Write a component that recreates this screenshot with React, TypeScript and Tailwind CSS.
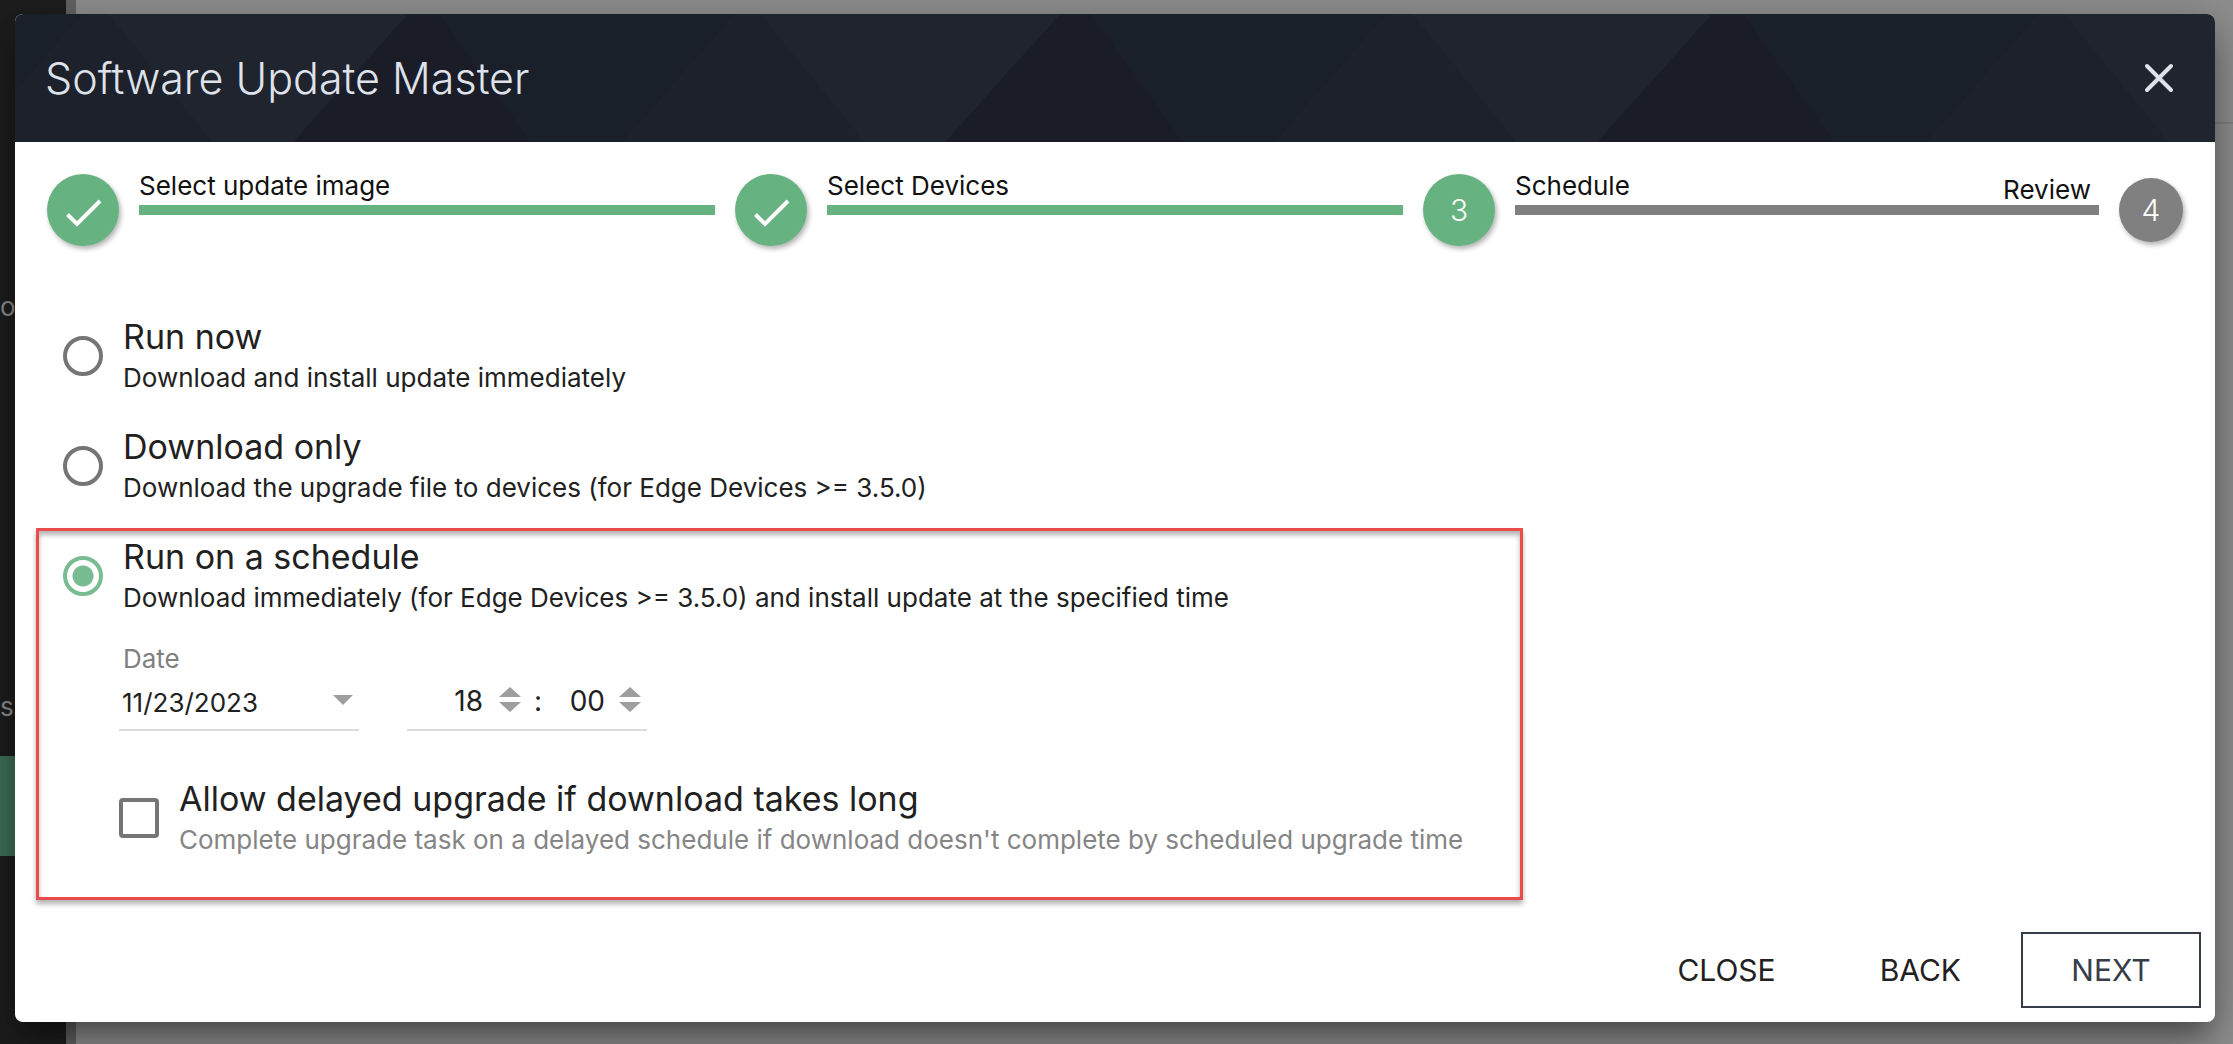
import { useState } from 'react';
import type { ReactNode } from 'react';

const STEPS = ['Select update image', 'Select Devices', 'Schedule'];

const MODES = [
  {
    id: 'now',
    title: 'Run now',
    hint: 'Download and install update immediately',
  },
  {
    id: 'download',
    title: 'Download only',
    hint: 'Download the upgrade file to devices (for Edge Devices >= 3.5.0)',
  },
];

function Backdrop() {
  return (
    <div className="absolute inset-0 flex overflow-hidden" aria-hidden="true">
      <div className="w-[66px] shrink-0 bg-[#1d1d1d] pt-[256px] text-[26px] text-[#8a8a8a]">
        <div className="flex h-[100px] items-center">o</div>
        <div className="h-[300px]" />
        <div className="flex h-[100px] items-center">s</div>
        <div className="h-[100px] bg-[#3d6f56]" />
      </div>
      <div className="w-[10px] shrink-0 bg-[#626262]" />
      <div className="flex-1 bg-[#8e8e8e]">
        <div className="h-[124px] border-b-2 border-[#7f7f7f]" />
      </div>
    </div>
  );
}

// repeating angular facets behind the dialog title
function HeaderPattern() {
  return (
    <svg className="absolute inset-0 h-full w-full" aria-hidden="true">
      <defs>
        <pattern id="facets" x="278" y="0" width="652" height="128" patternUnits="userSpaceOnUse">
          <rect width="652" height="128" fill="#1f242e" />
          <path d="M115 0H147L239 128H0Z" fill="#1a1c27" />
          <path d="M147 0H443L331 128H239Z" fill="#1a2029" />
          <path d="M443 0H468L572 128H331Z" fill="#1c212b" />
        </pattern>
      </defs>
      <rect width="100%" height="100%" fill="url(#facets)" />
    </svg>
  );
}

function Stepper() {
  return (
    <ol className="flex items-center pt-8 pr-8 pl-8 text-[26px] leading-6 text-[#111]">
      {STEPS.map((label, i) => {
        const done = i < 2;
        return (
          <li key={label} className={done ? 'flex flex-[1_1_100px] gap-5 pr-5' : 'flex flex-[1_1_108px] gap-5 pr-5'}>
            <span className="flex size-[72px] shrink-0 items-center justify-center rounded-full bg-[#67b281] text-[30px] font-light text-white shadow-[2px_3px_5px_rgba(0,0,0,0.3)]">
              {done ? (
                <svg viewBox="0 0 40 40" className="mt-1 size-10" fill="none" stroke="white" strokeWidth="4">
                  <path d="M4.5 22.5L14 32L37 9" />
                </svg>
              ) : (
                i + 1
              )}
            </span>
            <div className="flex-1">
              <div className="flex h-[31px] justify-between">
                <span>{label}</span>
                {!done && <span className="pt-1 pr-2">Review</span>}
              </div>
              <div className={done ? 'h-[10px] bg-[#67b281]' : 'h-[10px] bg-[#808080]'} />
            </div>
          </li>
        );
      })}
      <li className="flex size-16 shrink-0 items-center justify-center rounded-full bg-[#808080] text-[30px] font-light text-white shadow-[2px_3px_5px_rgba(0,0,0,0.3)]">
        4
      </li>
    </ol>
  );
}

type ModeOptionProps = {
  id: string;
  title: string;
  hint: string;
  checked: boolean;
  onSelect: (id: string) => void;
};

function ModeOption({ id, title, hint, checked, onSelect }: ModeOptionProps) {
  return (
    <label className="flex w-fit items-center gap-5">
      <input
        type="radio"
        name="mode"
        checked={checked}
        onChange={() => onSelect(id)}
        className="mt-[2px] size-10 shrink-0 appearance-none rounded-full border-4 border-[#757575] checked:border-[#7abc92] checked:bg-[radial-gradient(circle,#7abc92_10px,transparent_11px)]"
      />
      <span>
        <span className="block text-[34px] leading-[46px]">{title}</span>
        <span className="block text-[26px] leading-9">{hint}</span>
      </span>
    </label>
  );
}

function Spinner({ name, onStep }: { name: string; onStep: (by: number) => void }) {
  return (
    <span className="mb-1 flex w-[22px] shrink-0 flex-col gap-[5px]">
      <button type="button" aria-label={`Increase ${name}`} onClick={() => onStep(1)}>
        <svg viewBox="0 0 22 10" className="block w-full" fill="#9e9e9e">
          <path d="M11 0L22 10H0Z" />
        </svg>
      </button>
      <button type="button" aria-label={`Decrease ${name}`} onClick={() => onStep(-1)}>
        <svg viewBox="0 0 22 10" className="block w-full" fill="#9e9e9e">
          <path d="M0 0H22L11 10Z" />
        </svg>
      </button>
    </span>
  );
}

function FooterButton({ children }: { children: ReactNode }) {
  return (
    <button type="button" className="h-[76px] px-[52px] text-[30px]">
      {children}
    </button>
  );
}

export default function App() {
  const [mode, setMode] = useState('schedule');
  const [date, setDate] = useState('11/23/2023');
  const [hours, setHours] = useState(18);
  const [minutes, setMinutes] = useState(0);
  const [delayed, setDelayed] = useState(false);

  return (
    <div className="relative min-h-screen px-[15px] pt-[14px] pb-[22px] font-['Inter',sans-serif] text-[#212121]">
      <Backdrop />

      <div
        role="dialog"
        aria-labelledby="dialog-title"
        className="relative mr-[3px] overflow-hidden rounded-lg bg-white shadow-[0_20px_28px_-6px_rgba(0,0,0,0.35),0_10px_50px_2px_rgba(0,0,0,0.25)]"
      >
        <header className="relative flex h-32 items-center justify-between pr-[38px] pl-[30px] text-[#dfe2ea]">
          <HeaderPattern />
          <h1 id="dialog-title" className="relative text-[43px] font-light">
            Software Update Master
          </h1>
          <button type="button" aria-label="Close dialog" className="relative">
            <svg
              viewBox="0 0 36 36"
              className="size-9"
              fill="none"
              stroke="currentColor"
              strokeWidth="4"
              strokeLinecap="round"
            >
              <path d="M6 6L30 30M30 6L6 30" />
            </svg>
          </button>
        </header>

        <Stepper />

        <div className="flex flex-col gap-7 pt-[68px] pl-12">
          {MODES.map((m) => (
            <ModeOption key={m.id} {...m} checked={mode === m.id} onSelect={setMode} />
          ))}
        </div>

        {/* Scheduled run settings */}
        <section className="mt-[22px] ml-[21px] w-[1487px] max-w-full border-3 border-[#ea4c4c] pt-[3px] pb-[39px] pl-6 shadow-[0_4px_5px_rgba(0,0,0,0.3),inset_0_4px_5px_rgba(0,0,0,0.3)]">
          <ModeOption
            id="schedule"
            title="Run on a schedule"
            hint="Download immediately (for Edge Devices >= 3.5.0) and install update at the specified time"
            checked={mode === 'schedule'}
            onSelect={setMode}
          />

          <div className="mt-[27px] flex items-end gap-12 pl-14">
            <div className="w-60">
              <label htmlFor="date" className="block pl-1 text-[26px] leading-8 text-[#808080]">
                Date
              </label>
              <div className="flex h-14 items-center border-b-2 border-[#dcdcdc] pr-[6px] pl-[3px]">
                <input
                  id="date"
                  value={date}
                  onChange={(e) => setDate(e.target.value)}
                  className="w-full min-w-0 text-[26px] outline-none"
                />
                <button type="button" aria-label="Open calendar" className="mb-1 shrink-0">
                  <svg viewBox="0 0 20 10" className="block w-5" fill="#9e9e9e">
                    <path d="M0 0H20L10 10Z" />
                  </svg>
                </button>
              </div>
            </div>

            <div className="flex h-[58px] w-60 items-center border-b-2 border-[#dcdcdc] text-[28px]">
              <input
                aria-label="Hours"
                value={String(hours).padStart(2, '0')}
                onChange={(e) => setHours(Number(e.target.value) % 24)}
                className="mr-4 w-[76px] text-right outline-none"
              />
              <Spinner name="hours" onStep={(by) => setHours((hours + by + 24) % 24)} />
              <span className="w-[34px] text-center">:</span>
              <input
                aria-label="Minutes"
                value={String(minutes).padStart(2, '0')}
                onChange={(e) => setMinutes(Number(e.target.value) % 60)}
                className="mr-[14px] w-[50px] text-right outline-none"
              />
              <Spinner name="minutes" onStep={(by) => setMinutes((minutes + by + 60) % 60)} />
            </div>
          </div>

          <label className="mt-[45px] flex w-fit items-center gap-5 pl-14">
            <input
              type="checkbox"
              checked={delayed}
              onChange={(e) => setDelayed(e.target.checked)}
              className="mt-[2px] size-10 shrink-0 appearance-none rounded border-4 border-[#757575] checked:bg-[#7abc92]"
            />
            <span>
              <span className="block text-[34px] leading-[46px]">Allow delayed upgrade if download takes long</span>
              <span className="block text-[26px] leading-9 text-[#858585]">
                Complete upgrade task on a delayed schedule if download doesn't complete by scheduled upgrade time
              </span>
            </span>
          </label>
        </section>

        <footer className="mt-8 flex justify-end pr-[14px] pb-[14px]">
          <FooterButton>CLOSE</FooterButton>
          <FooterButton>BACK</FooterButton>
          <button type="button" className="ml-2 h-[76px] w-[180px] border-2 border-[#363d49] text-[30px] text-[#363d49]">
            NEXT
          </button>
        </footer>
      </div>
    </div>
  );
}
